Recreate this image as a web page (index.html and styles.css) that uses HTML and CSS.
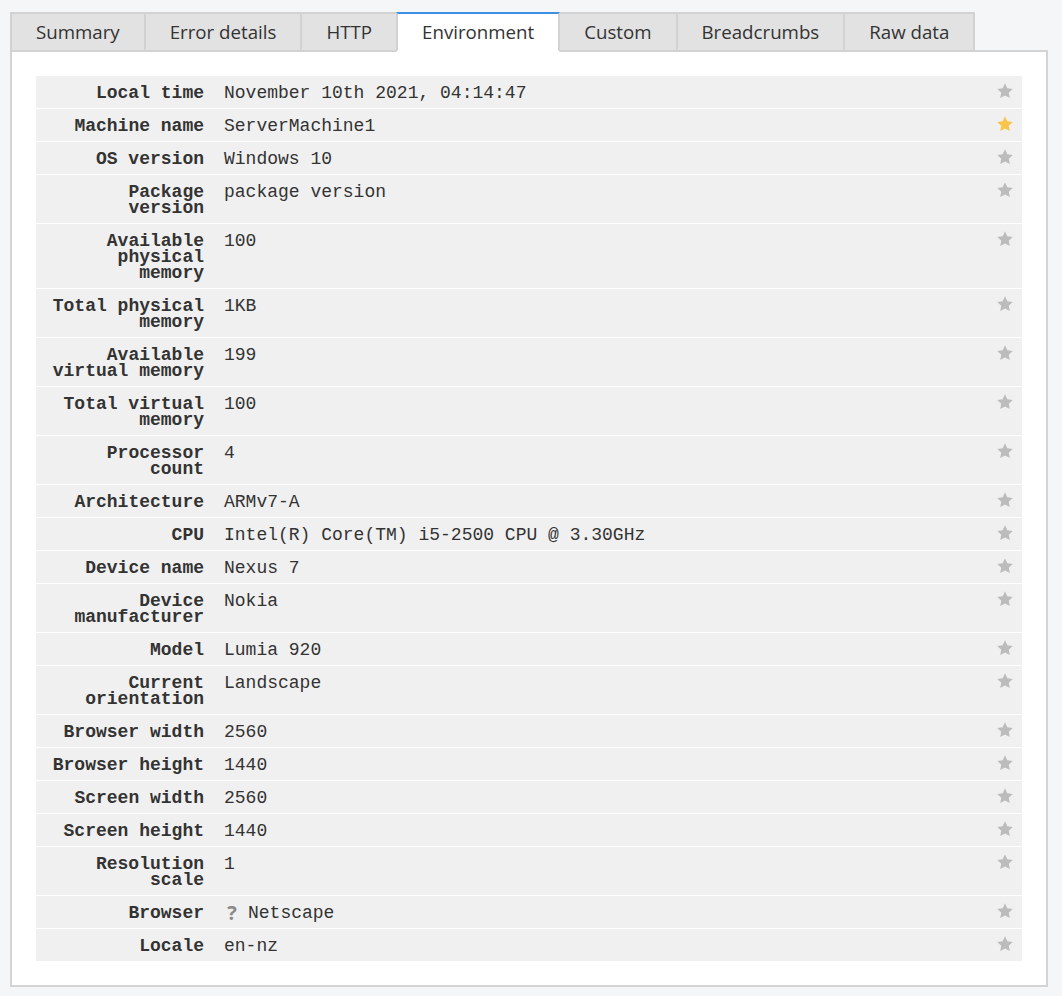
FILE: index.html
```html
<!DOCTYPE html>
<html lang="en">
<head>
<meta charset="utf-8">
<title>Environment</title>
<link rel="stylesheet" href="styles.css">
</head>
<body>
<svg width="0" height="0" class="defs" aria-hidden="true">
  <defs>
    <symbol id="star" viewBox="0 0 24 24">
      <path d="M12 1.8l3.1 6.6 7.2.9-5.3 5 1.4 7.1L12 17.9l-6.4 3.5 1.4-7.1-5.3-5 7.2-.9z"/>
    </symbol>
  </defs>
</svg>
<div class="tabs">
  <div class="tab">Summary</div>
  <div class="tab">Error details</div>
  <div class="tab">HTTP</div>
  <div class="tab active">Environment</div>
  <div class="tab">Custom</div>
  <div class="tab">Breadcrumbs</div>
  <div class="tab">Raw data</div>
</div>
<div class="panel">
  <div class="table">
    <div class="row"><div class="key">Local time</div><div class="val">November 10th 2021, 04:14:47</div><div class="fav"><svg class="star"><use href="#star"/></svg></div></div>
    <div class="row"><div class="key">Machine name</div><div class="val">ServerMachine1</div><div class="fav"><svg class="star on"><use href="#star"/></svg></div></div>
    <div class="row"><div class="key">OS version</div><div class="val">Windows 10</div><div class="fav"><svg class="star"><use href="#star"/></svg></div></div>
    <div class="row"><div class="key">Package version</div><div class="val">package version</div><div class="fav"><svg class="star"><use href="#star"/></svg></div></div>
    <div class="row"><div class="key">Available physical memory</div><div class="val">100</div><div class="fav"><svg class="star"><use href="#star"/></svg></div></div>
    <div class="row"><div class="key">Total physical memory</div><div class="val">1KB</div><div class="fav"><svg class="star"><use href="#star"/></svg></div></div>
    <div class="row"><div class="key">Available virtual memory</div><div class="val">199</div><div class="fav"><svg class="star"><use href="#star"/></svg></div></div>
    <div class="row"><div class="key">Total virtual memory</div><div class="val">100</div><div class="fav"><svg class="star"><use href="#star"/></svg></div></div>
    <div class="row"><div class="key">Processor count</div><div class="val">4</div><div class="fav"><svg class="star"><use href="#star"/></svg></div></div>
    <div class="row"><div class="key">Architecture</div><div class="val">ARMv7-A</div><div class="fav"><svg class="star"><use href="#star"/></svg></div></div>
    <div class="row"><div class="key">CPU</div><div class="val">Intel(R) Core(TM) i5-2500 CPU @ 3.30GHz</div><div class="fav"><svg class="star"><use href="#star"/></svg></div></div>
    <div class="row"><div class="key">Device name</div><div class="val">Nexus 7</div><div class="fav"><svg class="star"><use href="#star"/></svg></div></div>
    <div class="row"><div class="key">Device manufacturer</div><div class="val">Nokia</div><div class="fav"><svg class="star"><use href="#star"/></svg></div></div>
    <div class="row"><div class="key">Model</div><div class="val">Lumia 920</div><div class="fav"><svg class="star"><use href="#star"/></svg></div></div>
    <div class="row"><div class="key">Current orientation</div><div class="val">Landscape</div><div class="fav"><svg class="star"><use href="#star"/></svg></div></div>
    <div class="row"><div class="key">Browser width</div><div class="val">2560</div><div class="fav"><svg class="star"><use href="#star"/></svg></div></div>
    <div class="row"><div class="key">Browser height</div><div class="val">1440</div><div class="fav"><svg class="star"><use href="#star"/></svg></div></div>
    <div class="row"><div class="key">Screen width</div><div class="val">2560</div><div class="fav"><svg class="star"><use href="#star"/></svg></div></div>
    <div class="row"><div class="key">Screen height</div><div class="val">1440</div><div class="fav"><svg class="star"><use href="#star"/></svg></div></div>
    <div class="row"><div class="key">Resolution scale</div><div class="val">1</div><div class="fav"><svg class="star"><use href="#star"/></svg></div></div>
    <div class="row"><div class="key">Browser</div><div class="val"><span class="unknown">?</span>Netscape</div><div class="fav"><svg class="star"><use href="#star"/></svg></div></div>
    <div class="row"><div class="key">Locale</div><div class="val">en-nz</div><div class="fav"><svg class="star"><use href="#star"/></svg></div></div>
  </div>
</div>
</body>
</html>
```
FILE: styles.css
```css
html, body {
  margin: 0;
  background: #f5f6f8;
}
body {
  padding: 12px 14px 9px 10px;
}
.defs {
  position: absolute;
  width: 0;
  height: 0;
}
.tabs {
  display: flex;
  position: relative;
  z-index: 1;
  margin-bottom: -2px;
}
.tab {
  font-family: "Open Sans", sans-serif;
  font-size: 18.7px;
  line-height: 24px;
  color: #333;
  background: #e2e2e2;
  border: 2px solid #d2d2d2;
  padding: 6px 24px 6px 24px;
  margin-right: -2px;
}
.tab.active {
  background: #fff;
  border-top-color: #3d8fe2;
  border-bottom-color: #fff;
  position: relative;
  z-index: 2;
}
.panel {
  background: #fff;
  border: 2px solid #d4d4d4;
  padding: 24px;
}
.table {
  display: flex;
  flex-direction: column;
  font-family: "Liberation Mono", "Courier New", monospace;
  font-size: 18px;
  line-height: 16px;
  color: #333;
}
.row {
  display: grid;
  grid-template-columns: 178px 1fr 32px;
  background: #f0f0f0;
  border-bottom: 1px solid #fff;
}
.row:last-child {
  border-bottom: none;
}
.key {
  font-weight: bold;
  text-align: right;
  padding: 9px 10px 7px 12px;
}
.val {
  padding: 9px 10px 7px 10px;
  display: flex;
  align-items: flex-start;
}
.fav {
  padding: 6px 8px 0 0;
  display: flex;
  justify-content: flex-end;
}
.star {
  width: 18px;
  height: 18px;
  fill: #bcbcbc;
}
.star.on {
  fill: #f9c448;
}
.unknown {
  display: inline-block;
  width: 16px;
  margin-right: 8px;
  text-align: center;
  font-family: "Open Sans", sans-serif;
  font-weight: bold;
  font-size: 20px;
  line-height: 16px;
  color: #8a8a8a;
}
```
